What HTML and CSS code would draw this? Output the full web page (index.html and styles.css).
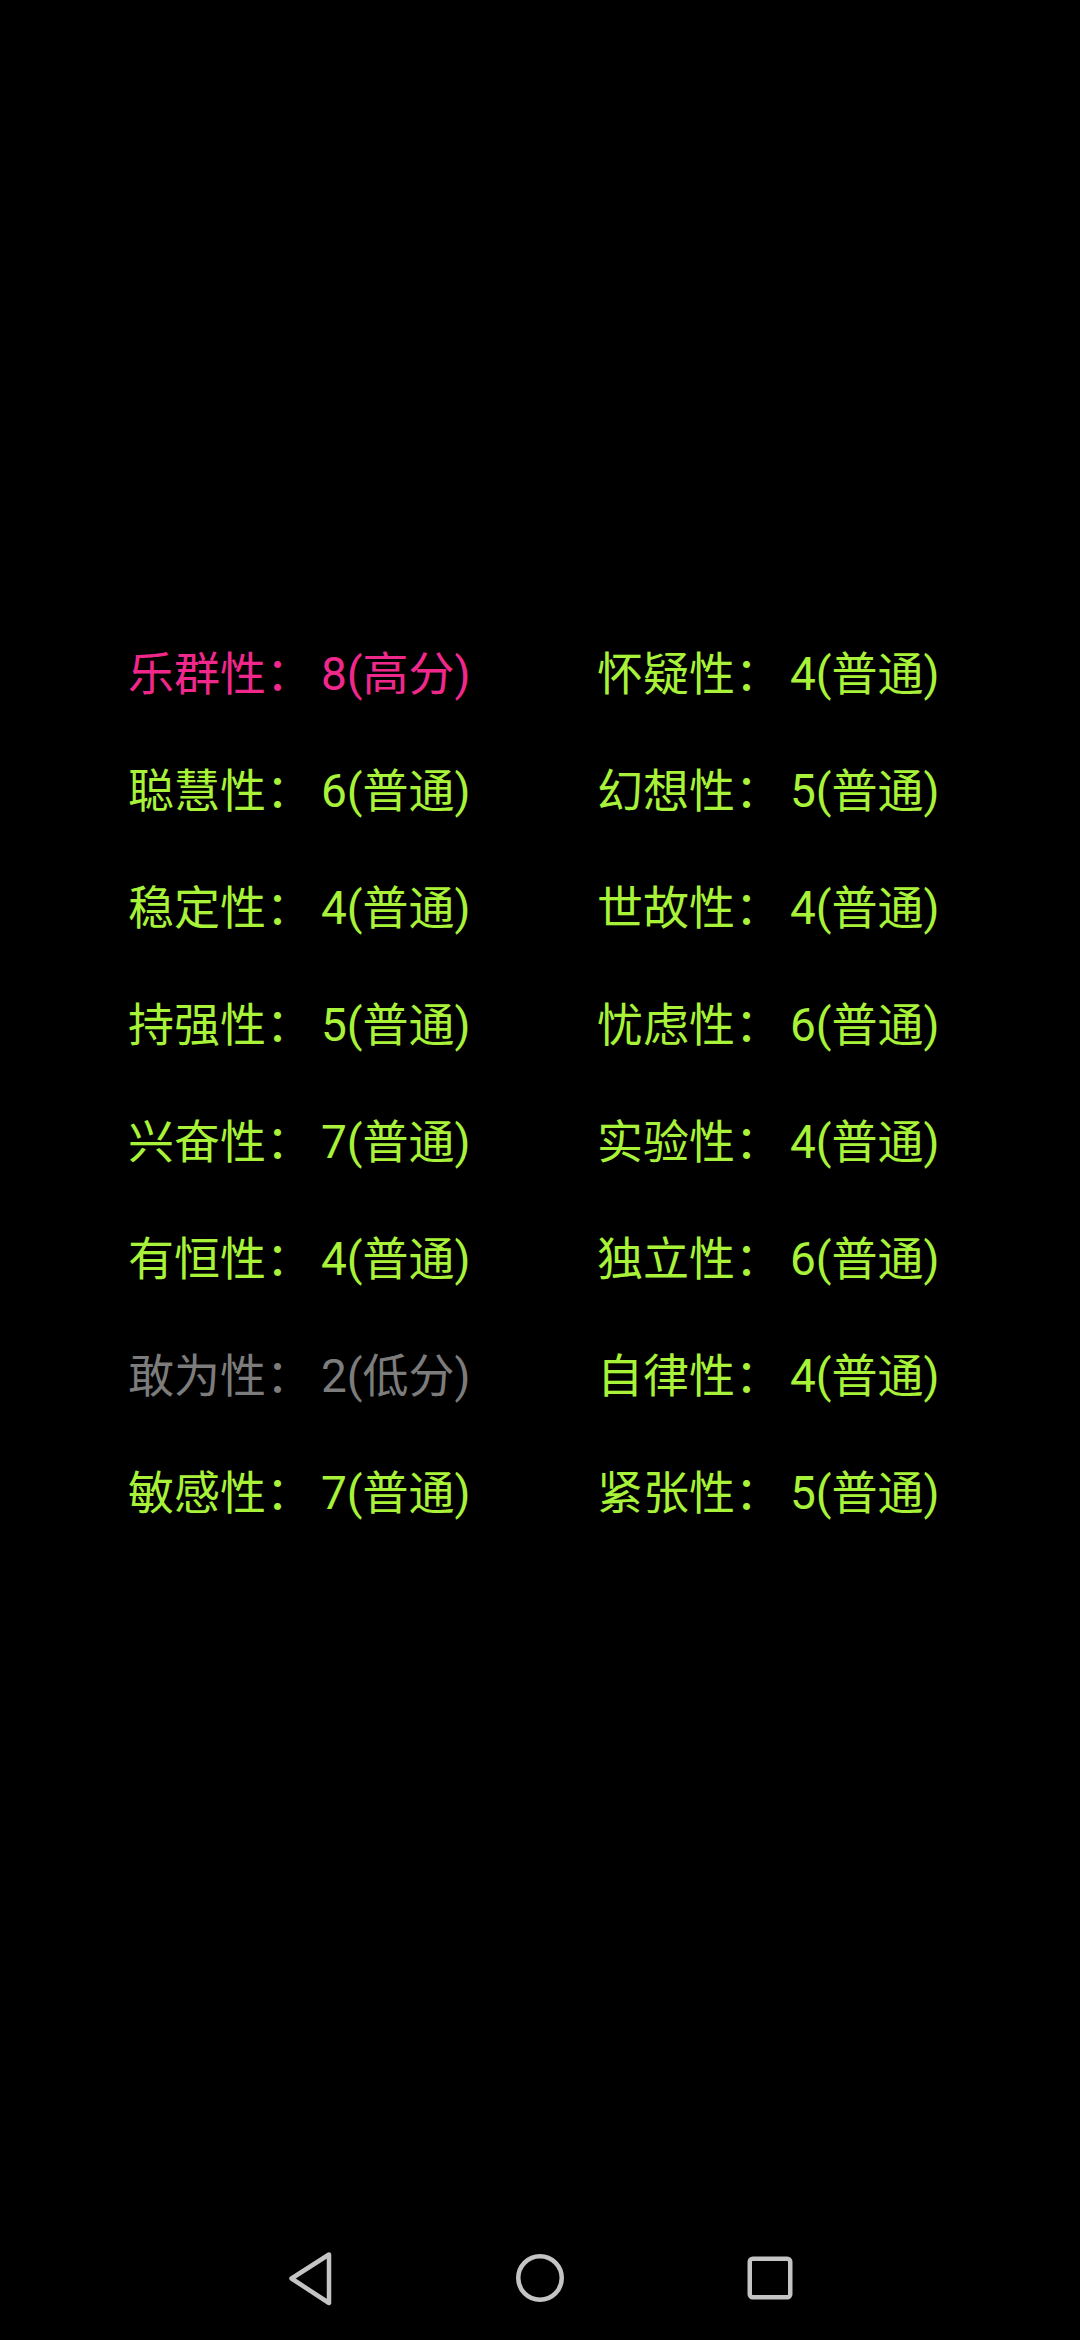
FILE: index.html
```html
<!DOCTYPE html>
<html lang="zh-CN">
<head>
<meta charset="utf-8">
<title>16PF</title>
<link rel="stylesheet" href="styles.css">
</head>
<body>
<div class="screen">
  <main class="content">
    <div class="grid">
      <div class="item high"><span class="label">乐群性：</span><span class="value">8(高分)</span></div>
      <div class="item"><span class="label">怀疑性：</span><span class="value">4(普通)</span></div>
      <div class="item"><span class="label">聪慧性：</span><span class="value">6(普通)</span></div>
      <div class="item"><span class="label">幻想性：</span><span class="value">5(普通)</span></div>
      <div class="item"><span class="label">稳定性：</span><span class="value">4(普通)</span></div>
      <div class="item"><span class="label">世故性：</span><span class="value">4(普通)</span></div>
      <div class="item"><span class="label">持强性：</span><span class="value">5(普通)</span></div>
      <div class="item"><span class="label">忧虑性：</span><span class="value">6(普通)</span></div>
      <div class="item"><span class="label">兴奋性：</span><span class="value">7(普通)</span></div>
      <div class="item"><span class="label">实验性：</span><span class="value">4(普通)</span></div>
      <div class="item"><span class="label">有恒性：</span><span class="value">4(普通)</span></div>
      <div class="item"><span class="label">独立性：</span><span class="value">6(普通)</span></div>
      <div class="item low"><span class="label">敢为性：</span><span class="value">2(低分)</span></div>
      <div class="item"><span class="label">自律性：</span><span class="value">4(普通)</span></div>
      <div class="item"><span class="label">敏感性：</span><span class="value">7(普通)</span></div>
      <div class="item"><span class="label">紧张性：</span><span class="value">5(普通)</span></div>
    </div>
  </main>
  <nav class="navbar">
    <div class="nav-btn">
      <svg width="60" height="60" viewBox="0 0 60 60"><path d="M49 6.5 L11.5 30.5 L49 55 Z" fill="none" stroke="#c4c4c4" stroke-width="4.5" stroke-linejoin="round"/></svg>
    </div>
    <div class="nav-btn">
      <svg width="60" height="60" viewBox="0 0 60 60"><circle cx="30" cy="30" r="21.75" fill="none" stroke="#c4c4c4" stroke-width="4.5"/></svg>
    </div>
    <div class="nav-btn">
      <svg width="60" height="60" viewBox="0 0 60 60"><rect x="9.75" y="10.75" width="40.5" height="38.5" rx="3" fill="none" stroke="#c4c4c4" stroke-width="4.5"/></svg>
    </div>
  </nav>
</div>
</body>
</html>
```

FILE: styles.css
```css
html, body {
  margin: 0;
  padding: 0;
  background: #000;
}

.screen {
  width: 1080px;
  height: 2340px;
  display: flex;
  flex-direction: column;
  background: #000;
  overflow: hidden;
}

.content {
  flex: 1;
  padding-top: 616px;
}

.grid {
  display: grid;
  grid-template-columns: 469px 469px;
  padding-left: 128px;
}

.item {
  font-family: Roboto, "Noto Sans CJK SC", sans-serif;
  font-size: 46px;
  line-height: 117px;
  height: 117px;
  color: #a8f23a;
  white-space: nowrap;
}

.value {
  margin-left: 9px;
}

.item.high {
  color: #f0288c;
}

.item.low {
  color: #7c7c7c;
}

.navbar {
  height: 120px;
  padding-bottom: 4px;
  box-sizing: border-box;
  display: flex;
  justify-content: center;
  align-items: center;
}

.nav-btn {
  width: 230px;
  display: flex;
  justify-content: center;
  align-items: center;
}

.nav-btn svg {
  display: block;
}
```
